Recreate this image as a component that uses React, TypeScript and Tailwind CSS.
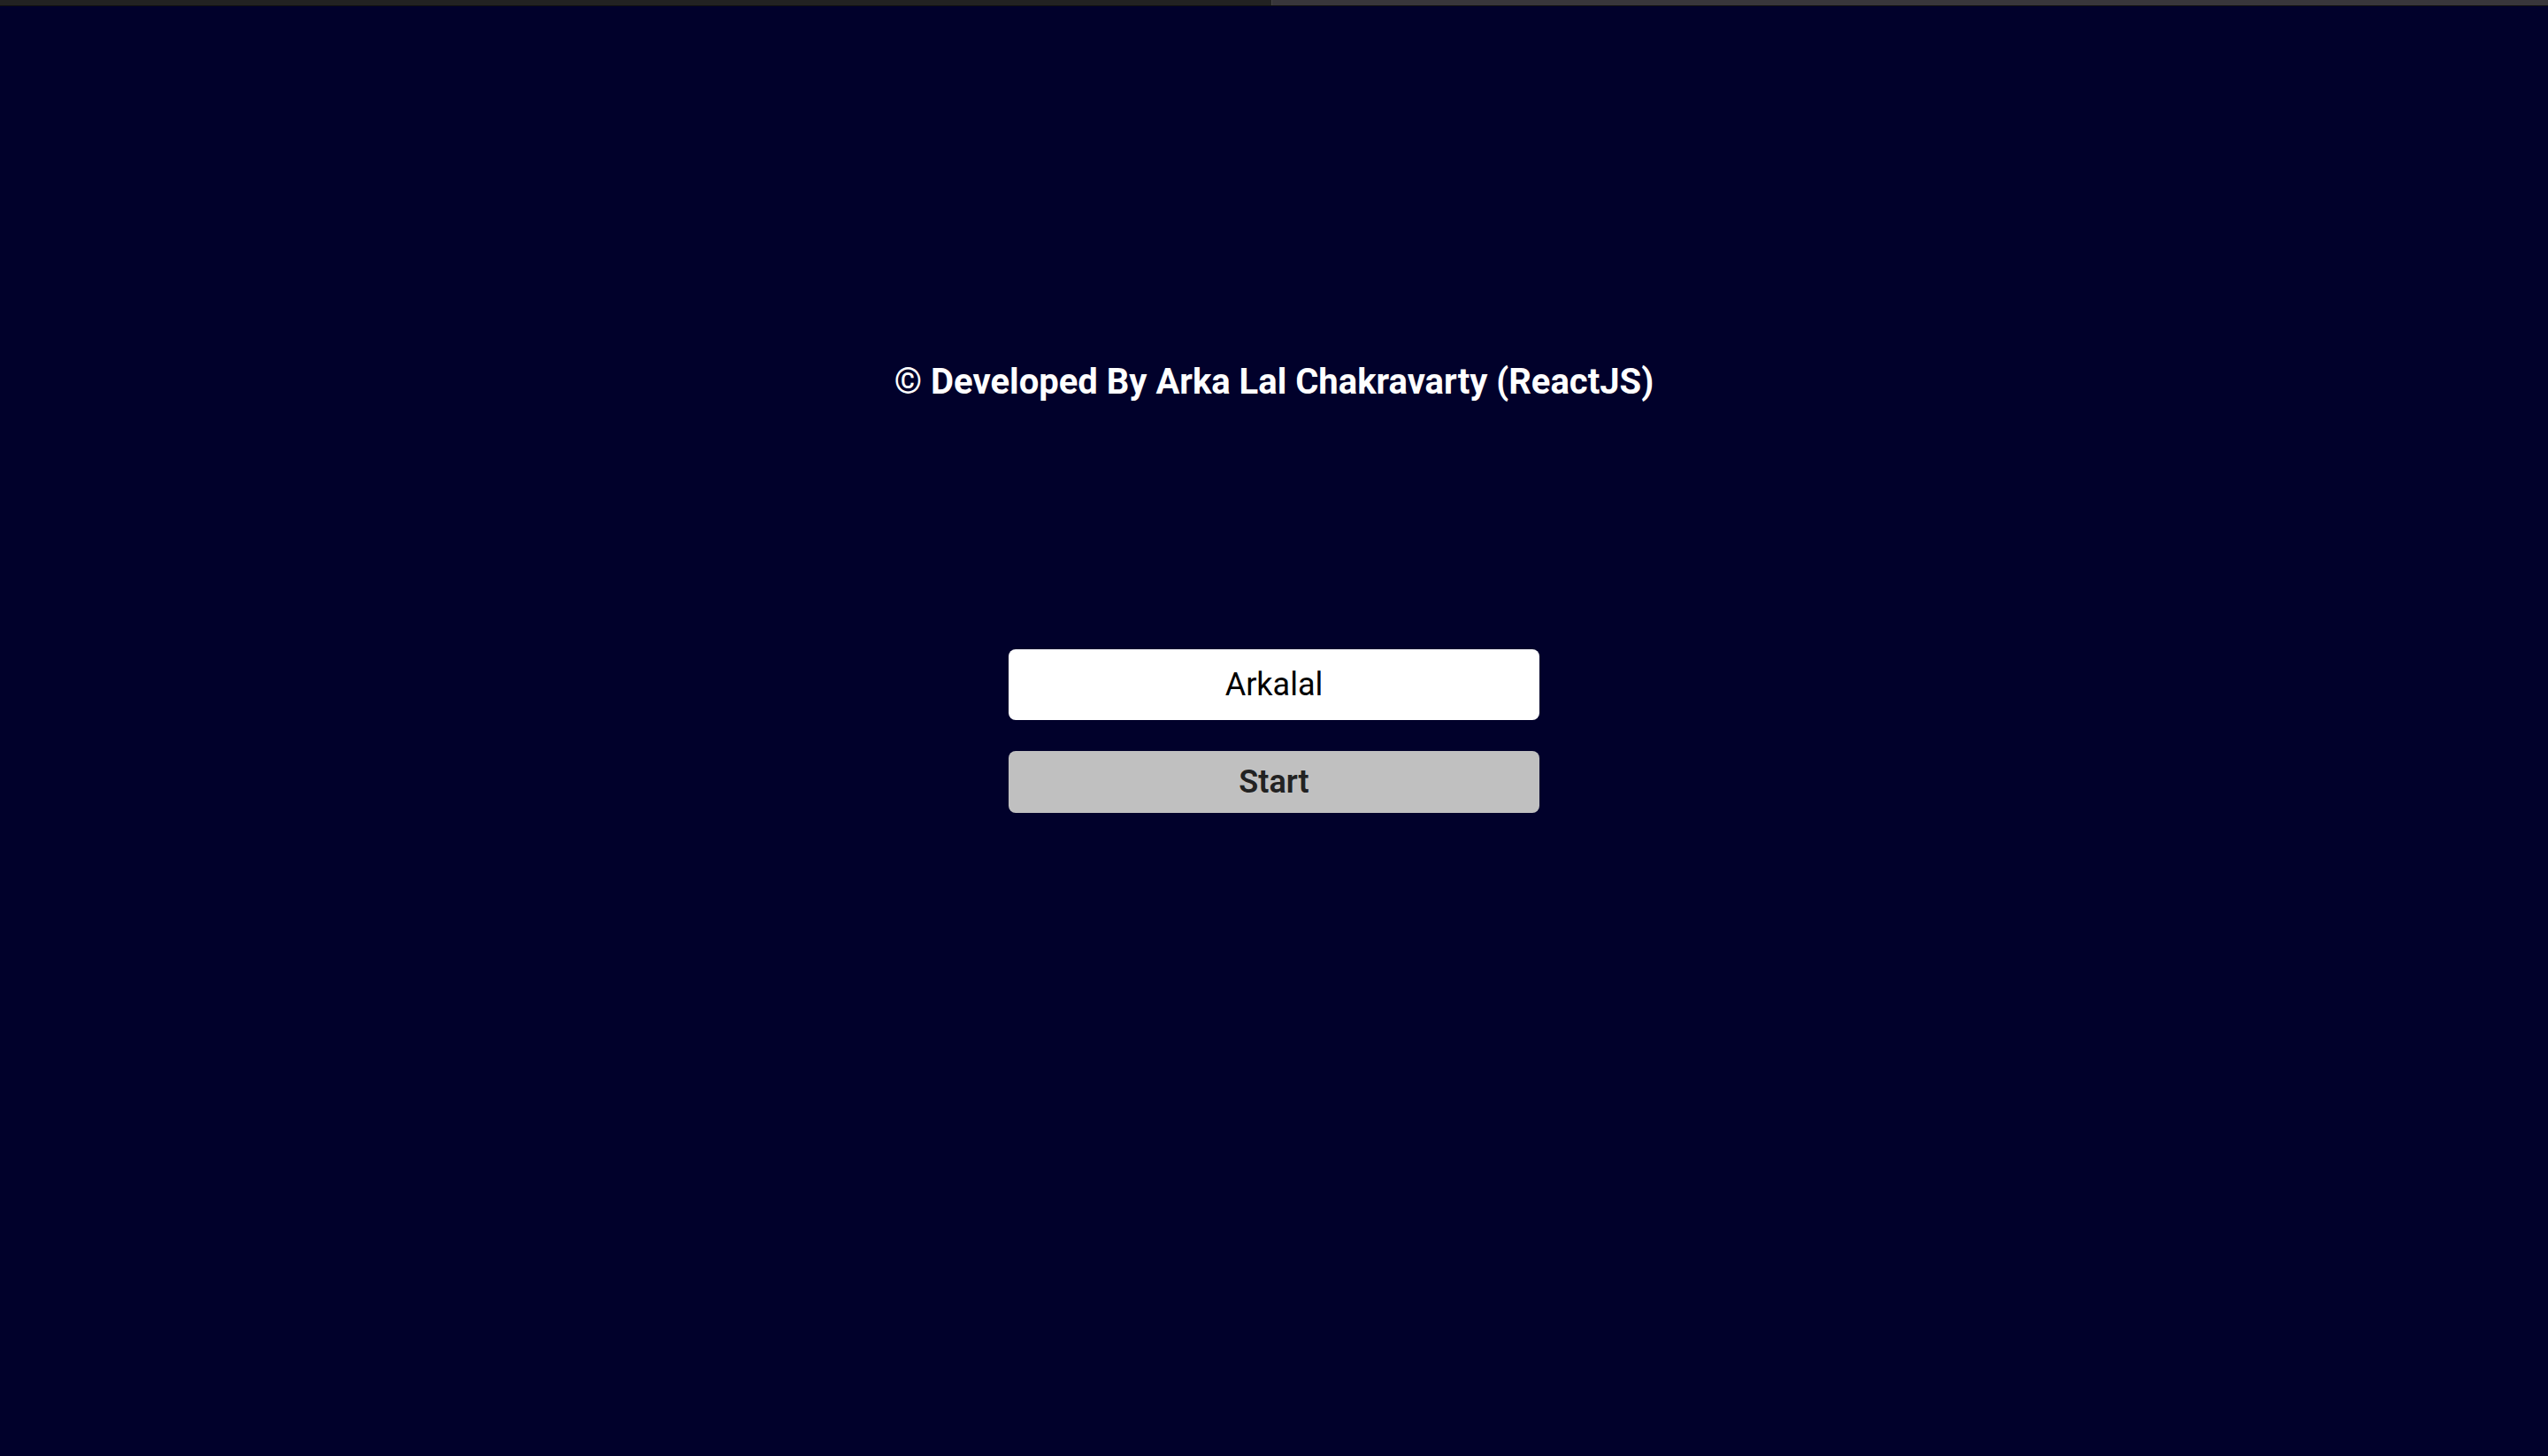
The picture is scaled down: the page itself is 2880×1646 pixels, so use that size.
import React from "react";

export default function App() {
  return (
    <div className="min-h-screen w-full bg-[#01012b] flex flex-col font-['Roboto',sans-serif]">
      <div className="flex h-[7px] w-full border-b border-[#111111]">
        <div className="h-full w-[1438px] bg-[#222222] border-r border-[#444444]" />
        <div className="h-full flex-1 bg-[#38363b]" />
      </div>

      <h1 className="mt-[401px] text-center text-[40px] leading-[48px] font-bold text-white">
        © Developed By Arka Lal Chakravarty (ReactJS)
      </h1>

      <div className="mt-[278px] flex flex-col items-center gap-[35px]">
        <input
          type="text"
          defaultValue="Arkalal"
          className="h-[80px] w-[600px] rounded-[8px] bg-white text-center text-[36px] text-black outline-none"
        />
        <button className="h-[70px] w-[600px] rounded-[8px] bg-[#c0c0c0] text-[36px] font-semibold text-[#222222]">
          Start
        </button>
      </div>
    </div>
  );
}
